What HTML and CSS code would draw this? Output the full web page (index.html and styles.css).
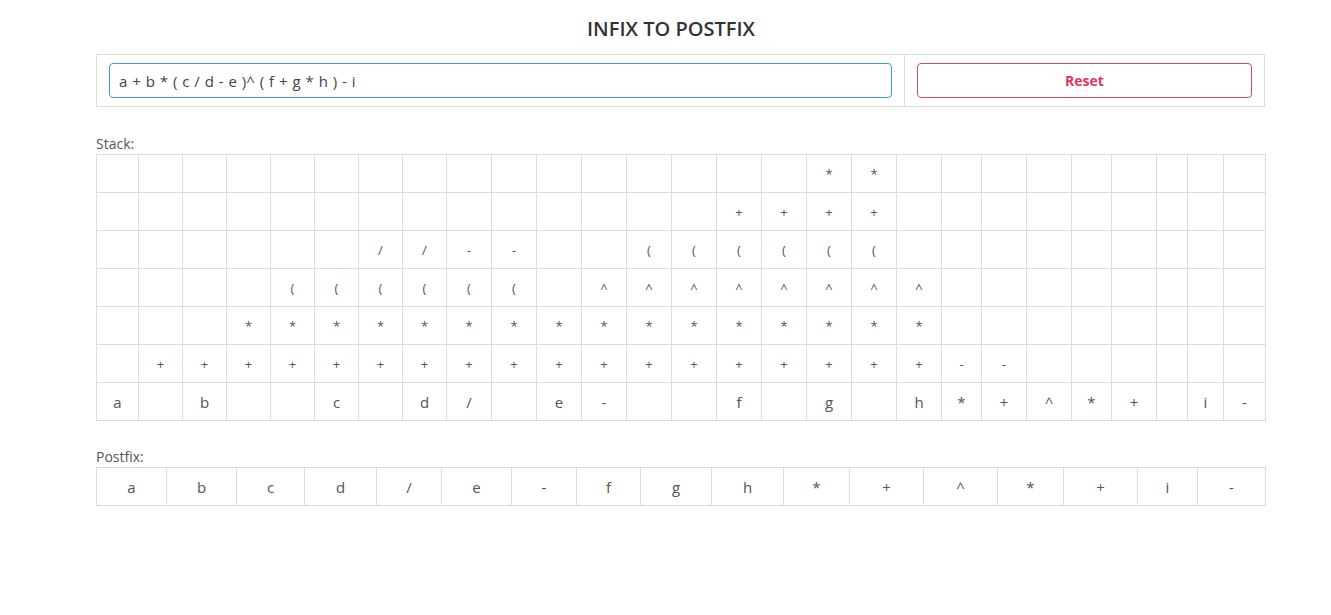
FILE: index.html
```html
<!DOCTYPE html>
<html>
<head>
<meta charset="utf-8">
<title>Infix to Postfix</title>
<link rel="stylesheet" href="styles.css">
</head>
<body>
<div class="page">
  <h1 class="title">INFIX TO POSTFIX</h1>
  <table class="panel">
    <tr>
      <td class="panel-input"><input class="expr" type="text" value="a + b * ( c / d - e )^ ( f + g * h ) - i"></td>
      <td class="panel-btn"><button class="reset">Reset</button></td>
    </tr>
  </table>

  <div class="label label-stack">Stack:</div>
  <table class="grid">
    <colgroup>
      <col class="w42"><col class="w44"><col class="w44"><col class="w44"><col class="w44"><col class="w44"><col class="w44"><col class="w44">
      <col class="w45"><col class="w45"><col class="w45"><col class="w45"><col class="w45"><col class="w45"><col class="w45"><col class="w45">
      <col class="w45"><col class="w45"><col class="w45"><col class="w40"><col class="w45"><col class="w45"><col class="w40"><col class="w45">
      <col class="w31"><col class="w36"><col class="w42">
    </colgroup>
    <tr><td></td><td></td><td></td><td></td><td></td><td></td><td></td><td></td><td></td><td></td><td></td><td></td><td></td><td></td><td></td><td></td><td>*</td><td>*</td><td></td><td></td><td></td><td></td><td></td><td></td><td></td><td></td><td></td></tr>
    <tr><td></td><td></td><td></td><td></td><td></td><td></td><td></td><td></td><td></td><td></td><td></td><td></td><td></td><td></td><td>+</td><td>+</td><td>+</td><td>+</td><td></td><td></td><td></td><td></td><td></td><td></td><td></td><td></td><td></td></tr>
    <tr><td></td><td></td><td></td><td></td><td></td><td></td><td>/</td><td>/</td><td>-</td><td>-</td><td></td><td></td><td>(</td><td>(</td><td>(</td><td>(</td><td>(</td><td>(</td><td></td><td></td><td></td><td></td><td></td><td></td><td></td><td></td><td></td></tr>
    <tr><td></td><td></td><td></td><td></td><td>(</td><td>(</td><td>(</td><td>(</td><td>(</td><td>(</td><td></td><td>^</td><td>^</td><td>^</td><td>^</td><td>^</td><td>^</td><td>^</td><td>^</td><td></td><td></td><td></td><td></td><td></td><td></td><td></td><td></td></tr>
    <tr><td></td><td></td><td></td><td>*</td><td>*</td><td>*</td><td>*</td><td>*</td><td>*</td><td>*</td><td>*</td><td>*</td><td>*</td><td>*</td><td>*</td><td>*</td><td>*</td><td>*</td><td>*</td><td></td><td></td><td></td><td></td><td></td><td></td><td></td><td></td></tr>
    <tr><td></td><td>+</td><td>+</td><td>+</td><td>+</td><td>+</td><td>+</td><td>+</td><td>+</td><td>+</td><td>+</td><td>+</td><td>+</td><td>+</td><td>+</td><td>+</td><td>+</td><td>+</td><td>+</td><td>-</td><td>-</td><td></td><td></td><td></td><td></td><td></td><td></td></tr>
    <tr class="tokens"><td>a</td><td></td><td>b</td><td></td><td></td><td>c</td><td></td><td>d</td><td>/</td><td></td><td>e</td><td>-</td><td></td><td></td><td>f</td><td></td><td>g</td><td></td><td>h</td><td>*</td><td>+</td><td>^</td><td>*</td><td>+</td><td></td><td>i</td><td>-</td></tr>
  </table>

  <div class="label label-postfix">Postfix:</div>
  <table class="grid tokens">
    <colgroup>
      <col class="w70"><col class="w70"><col class="w68"><col class="w72"><col class="w65"><col class="w70"><col class="w65"><col class="w64"><col class="w71">
      <col class="w72"><col class="w66"><col class="w74"><col class="w74"><col class="w66"><col class="w74"><col class="w60"><col class="w68">
    </colgroup>
    <tr><td>a</td><td>b</td><td>c</td><td>d</td><td>/</td><td>e</td><td>-</td><td>f</td><td>g</td><td>h</td><td>*</td><td>+</td><td>^</td><td>*</td><td>+</td><td>i</td><td>-</td></tr>
  </table>
</div>
</body>
</html>
```

FILE: styles.css
```css
html, body {
  margin: 0;
  padding: 0;
  background: #ffffff;
}

body {
  font-family: "Open Sans", "Noto Sans", "Liberation Sans", sans-serif;
  font-size: 14px;
  color: #333333;
}

.page {
  width: 1169px;
  margin-left: 96px;
}

.title {
  margin: 18px 0 14px 0;
  padding-right: 19px;
  font-size: 20px;
  line-height: 22px;
  font-weight: 600;
  text-align: center;
  color: #333333;
}

.panel {
  width: 1169px;
  border-collapse: collapse;
  border: 1px solid #dddddd;
  table-layout: fixed;
}

.panel td {
  padding: 8px 12px;
  vertical-align: middle;
}

.panel-input {
  width: 783px;
  border-right: 1px solid #dddddd;
}

.expr {
  display: block;
  box-sizing: border-box;
  width: 100%;
  height: 35px;
  margin: 0;
  padding: 0 9px;
  border: 1px solid #3a9dd6;
  border-radius: 4px;
  font-family: "Open Sans", "Noto Sans", sans-serif;
  font-size: 15px;
  word-spacing: 1px;
  color: #444444;
  outline: none;
  background: #ffffff;
}

.reset {
  display: block;
  box-sizing: border-box;
  width: 100%;
  height: 35px;
  margin: 0;
  padding: 0;
  border: 1px solid #dd4469;
  border-radius: 4px;
  background: #ffffff;
  color: #e7355f;
  font-family: "Open Sans", "Noto Sans", sans-serif;
  font-size: 14px;
  font-weight: 700;
}

.label {
  font-size: 14px;
  line-height: 21px;
  color: #555555;
}

.label-stack {
  margin-top: 26px;
}

.label-postfix {
  margin-top: 25px;
}

.grid {
  width: 1169px;
  border-collapse: collapse;
  table-layout: fixed;
}

.grid td {
  height: 37px;
  padding: 0;
  border: 1px solid #dcdcdc;
  text-align: center;
  vertical-align: middle;
  font-size: 13px;
  color: #555555;
}

.tokens td {
  font-size: 15px;
  color: #555555;
}

.w31 { width: 31px; }
.w36 { width: 36px; }
.w40 { width: 40px; }
.w42 { width: 42px; }
.w44 { width: 44px; }
.w45 { width: 45px; }
.w60 { width: 60px; }
.w64 { width: 64px; }
.w65 { width: 65px; }
.w66 { width: 66px; }
.w68 { width: 68px; }
.w70 { width: 70px; }
.w71 { width: 71px; }
.w72 { width: 72px; }
.w74 { width: 74px; }
```
